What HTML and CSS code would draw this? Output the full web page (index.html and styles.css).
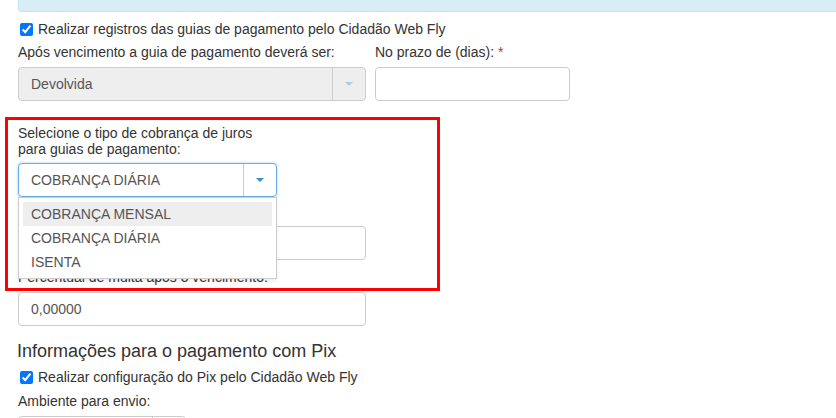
FILE: index.html
```html
<!DOCTYPE html>
<html lang="pt-BR">
<head>
  <meta charset="UTF-8" />
  <meta name="viewport" content="width=device-width, initial-scale=1.0"/>
  <title>Configuração de guias</title>
  <link rel="stylesheet" href="styles.css">
</head>
<body>
  <div class="page">
    <div class="alert-info"></div>

    <label class="check-row">
      <input type="checkbox" checked>
      <span>Realizar registros das guias de pagamento pelo Cidadão Web Fly</span>
    </label>

    <div class="row">
      <div class="field col-wide">
        <label class="field-label">Após vencimento a guia de pagamento deverá ser:</label>
        <div class="select disabled">
          <div class="select-value">Devolvida</div>
          <div class="select-arrow"><span class="caret light"></span></div>
        </div>
      </div>
      <div class="field col-narrow">
        <label class="field-label">No prazo de (dias): <span class="required">*</span></label>
        <div class="input"></div>
      </div>
    </div>

    <div class="field col-juros">
      <label class="field-label tight">Selecione o tipo de cobrança de juros para guias de pagamento:</label>
      <div class="select-wrap">
        <div class="select focused">
          <div class="select-value">COBRANÇA DIÁRIA</div>
          <div class="select-arrow"><span class="caret"></span></div>
        </div>
        <ul class="dropdown">
          <li class="active">COBRANÇA MENSAL</li>
          <li>COBRANÇA DIÁRIA</li>
          <li>ISENTA</li>
        </ul>
      </div>
    </div>

    <div class="field col-wide after-select">
      <label class="field-label covered">Percentual de juros ao dia:</label>
      <div class="input"></div>
    </div>

    <div class="field col-wide next">
      <label class="field-label">Percentual de multa após o vencimento:</label>
      <div class="input">0,00000</div>
    </div>

    <h4 class="section-title">Informações para o pagamento com Pix</h4>

    <label class="check-row pix">
      <input type="checkbox" checked>
      <span>Realizar configuração do Pix pelo Cidadão Web Fly</span>
    </label>

    <div class="field col-env">
      <label class="field-label">Ambiente para envio:</label>
      <div class="select">
        <div class="select-value"></div>
        <div class="select-arrow"><span class="caret"></span></div>
      </div>
    </div>

    <div class="highlight-box"></div>
  </div>
</body>
</html>
```

FILE: styles.css
```css
body {
  margin: 0;
  font-family: "Liberation Sans", Arial, sans-serif;
  font-size: 14px;
  color: #333;
  background: #fff;
  overflow: hidden;
}

.page {
  position: relative;
  padding-left: 18px;
  height: 418px;
  overflow: hidden;
}

.alert-info {
  height: 11px;
  margin-right: -20px;
  background: #d9edf7;
  border: 1px solid #bce8f1;
  border-top: none;
  border-radius: 0 0 0 4px;
}

.check-row {
  display: flex;
  align-items: center;
  gap: 5px;
  margin-top: 7px;
  line-height: 20px;
}

.check-row input {
  width: 13px;
  height: 13px;
  margin: 0 0 0 2px;
  accent-color: #0075ff;
}

.row {
  display: flex;
  gap: 9px;
  margin-top: 3px;
}

.col-wide {
  width: 348px;
}

.col-narrow {
  width: 195px;
}

.col-juros {
  width: 259px;
  margin-top: 24px;
}

.col-env {
  width: 168px;
  margin-top: 4px;
}

.field-label {
  display: block;
  margin-bottom: 5px;
  line-height: 20px;
}

.field-label.tight {
  line-height: 16px;
  margin-bottom: 6px;
}

.field-label.covered {
  visibility: hidden;
}

.required {
  color: #8b4a48;
}

.select {
  display: flex;
  height: 34px;
  box-sizing: border-box;
  border: 1px solid #ccc;
  border-radius: 4px;
  background: #fff;
  color: #555;
}

.select.disabled {
  background: #eee;
}

.select.focused {
  border-color: #66afe9;
  box-shadow: 0 0 3px rgba(102, 175, 233, 0.6);
}

.select-value {
  flex: 1;
  padding: 0 12px;
  line-height: 32px;
}

.select-arrow {
  width: 32px;
  border-left: 1px solid #ccc;
  display: flex;
  align-items: center;
  justify-content: center;
}

.caret {
  width: 0;
  height: 0;
  border-left: 4px solid transparent;
  border-right: 4px solid transparent;
  border-top: 4px solid #3c8dcc;
}

.caret.light {
  border-top-color: #a9cbe6;
}

.select-wrap {
  position: relative;
}

.dropdown {
  position: absolute;
  top: 100%;
  left: 0;
  right: 0;
  margin: 0;
  padding: 4px;
  list-style: none;
  background: #fff;
  border: 1px solid #ccc;
  box-shadow: 0 2px 4px rgba(0, 0, 0, 0.08);
  color: #555;
  z-index: 2;
}

.dropdown li {
  height: 24px;
  line-height: 24px;
  padding: 0 8px;
}

.dropdown li.active {
  background: #eee;
}

.input {
  height: 34px;
  box-sizing: border-box;
  border: 1px solid #ccc;
  border-radius: 4px;
  padding: 0 12px;
  line-height: 32px;
  color: #555;
}

.after-select {
  margin-top: 4px;
}

.next {
  margin-top: 7px;
}

.section-title {
  margin: 14px 0 0 -1px;
  font-size: 18px;
  font-weight: normal;
  line-height: 22px;
  color: #333;
}

.check-row.pix {
  margin-top: 5px;
}

.highlight-box {
  position: absolute;
  left: 5px;
  top: 117px;
  width: 435px;
  height: 174px;
  box-sizing: border-box;
  border: 3px solid #f00;
  z-index: 3;
}
```
